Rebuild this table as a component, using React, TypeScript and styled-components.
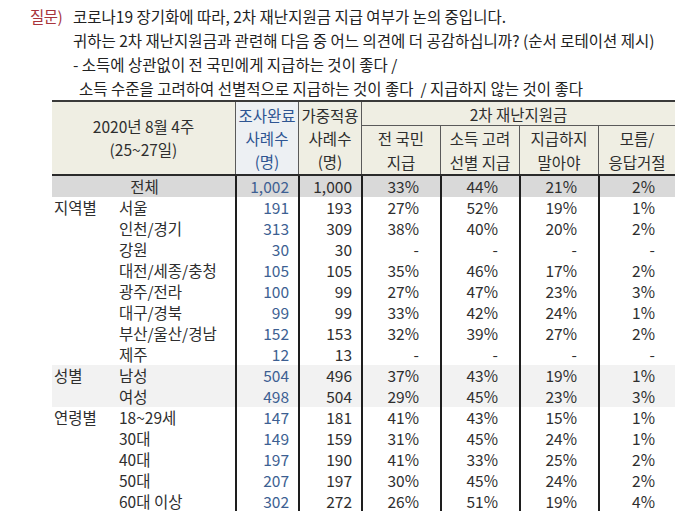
import styled, { createGlobalStyle } from "styled-components";

const GlobalStyle = createGlobalStyle`
  body {
    margin: 0;
    background: #ffffff;
    font-family: "Noto Sans CJK KR", "Noto Sans", sans-serif;
    color: #2e2e2e;
  }
`;

const COLS = "183px 63px 63px 79px 79px 79px 77px";

const Page = styled.div`
  width: 694px;
  height: 511px;
  overflow: hidden;
`;

const Question = styled.div`
  display: grid;
  grid-template-columns: 43px auto;
  padding: 4px 0 0 30px;
  font-size: 15.5px;
  line-height: 24px;
  color: #222;
`;

const QLabel = styled.span`
  color: #a8343c;
  letter-spacing: -0.5px;
`;

const QLines = styled.div`
  display: flex;
  flex-direction: column;
`;

const QLine = styled.div<{ $indent?: number }>`
  padding-left: ${(p) => p.$indent ?? 0}px;
  white-space: nowrap;
`;

const Table = styled.div`
  margin: 0 0 0 52px;
  width: 623px;
`;

const Header = styled.div`
  display: grid;
  grid-template-columns: ${COLS};
  grid-template-rows: 24px 48px;
  background: #efeee3;
  border-top: 2px solid #3a3a3a;
  border-bottom: 2px solid #2a2a2a;
`;

const HeadCell = styled.div<{ $rows?: number; $span?: number; $first?: boolean; $tint?: boolean; $under?: boolean }>`
  grid-row: span ${(p) => p.$rows ?? 1};
  grid-column: span ${(p) => p.$span ?? 1};
  display: flex;
  flex-direction: column;
  align-items: center;
  justify-content: center;
  font-size: 15.5px;
  line-height: ${(p) => (p.$rows === 2 ? "23px" : "24px")};
  text-align: center;
  white-space: nowrap;
  border-left: ${(p) => (p.$first ? "none" : "1px solid #5a5a5a")};
  border-bottom: ${(p) => (p.$under ? "1px solid #5a5a5a" : "none")};
  background: ${(p) => (p.$tint ? "#edf0f3" : "transparent")};
  color: ${(p) => (p.$tint ? "#2f5592" : "#2e2e2e")};
`;

const Row = styled.div<{ $bg?: string }>`
  display: grid;
  grid-template-columns: ${COLS};
  height: 21px;
  background: ${(p) => p.$bg ?? "transparent"};
  font-size: 15.5px;
  line-height: 21px;
`;

const LabelCell = styled.div<{ $center?: boolean }>`
  display: grid;
  grid-template-columns: ${(p) => (p.$center ? "1fr" : "65px 1fr")};
  padding-left: 2px;
  justify-items: ${(p) => (p.$center ? "center" : "start")};
  white-space: nowrap;
`;

const NumCell = styled.div<{ $blue?: boolean; $pad: number }>`
  border-left: 2px solid #1e1e1e;
  text-align: right;
  padding-right: ${(p) => p.$pad}px;
  color: ${(p) => (p.$blue ? "#3d5f92" : "#2e2e2e")};
  white-space: nowrap;
`;

type Line = { group?: string; name: string; n: string; w: string; p: string[]; bg?: string; center?: boolean };

const rows: Line[] = [
  { name: "전체", n: "1,002", w: "1,000", p: ["33%", "44%", "21%", "2%"], bg: "#d9d9d9", center: true },
  { group: "지역별", name: "서울", n: "191", w: "193", p: ["27%", "52%", "19%", "1%"] },
  { name: "인천/경기", n: "313", w: "309", p: ["38%", "40%", "20%", "2%"] },
  { name: "강원", n: "30", w: "30", p: ["-", "-", "-", "-"] },
  { name: "대전/세종/충청", n: "105", w: "105", p: ["35%", "46%", "17%", "2%"] },
  { name: "광주/전라", n: "100", w: "99", p: ["27%", "47%", "23%", "3%"] },
  { name: "대구/경북", n: "99", w: "99", p: ["33%", "42%", "24%", "1%"] },
  { name: "부산/울산/경남", n: "152", w: "153", p: ["32%", "39%", "27%", "2%"] },
  { name: "제주", n: "12", w: "13", p: ["-", "-", "-", "-"] },
  { group: "성별", name: "남성", n: "504", w: "496", p: ["37%", "43%", "19%", "1%"], bg: "#f2f2f2" },
  { name: "여성", n: "498", w: "504", p: ["29%", "45%", "23%", "3%"], bg: "#f2f2f2" },
  { group: "연령별", name: "18~29세", n: "147", w: "181", p: ["41%", "43%", "15%", "1%"] },
  { name: "30대", n: "149", w: "159", p: ["31%", "45%", "24%", "1%"] },
  { name: "40대", n: "197", w: "190", p: ["41%", "33%", "25%", "2%"] },
  { name: "50대", n: "207", w: "197", p: ["30%", "45%", "24%", "2%"] },
  { name: "60대 이상", n: "302", w: "272", p: ["26%", "51%", "19%", "4%"] },
];

const pctPad = [21, 21, 21, 20];

function App() {
  return (
    <Page>
      <GlobalStyle />
      <Question>
        <QLabel>질문)</QLabel>
        <QLines>
          <QLine>코로나19 장기화에 따라, 2차 재난지원금 지급 여부가 논의 중입니다.</QLine>
          <QLine>귀하는 2차 재난지원금과 관련해 다음 중 어느 의견에 더 공감하십니까? (순서 로테이션 제시)</QLine>
          <QLine>- 소득에 상관없이 전 국민에게 지급하는 것이 좋다 /</QLine>
          <QLine $indent={6}>소득 수준을 고려하여 선별적으로 지급하는 것이 좋다&nbsp;&nbsp;/ 지급하지 않는 것이 좋다</QLine>
        </QLines>
      </Question>
      <Table>
        <Header>
          <HeadCell $rows={2} $first>
            <span>2020년 8월 4주</span>
            <span>(25~27일)</span>
          </HeadCell>
          <HeadCell $rows={2} $tint>
            <span>조사완료</span>
            <span>사례수</span>
            <span>(명)</span>
          </HeadCell>
          <HeadCell $rows={2}>
            <span>가중적용</span>
            <span>사례수</span>
            <span>(명)</span>
          </HeadCell>
          <HeadCell $span={4} $under>2차 재난지원금</HeadCell>
          <HeadCell>
            <span>전 국민</span>
            <span>지급</span>
          </HeadCell>
          <HeadCell>
            <span>소득 고려</span>
            <span>선별 지급</span>
          </HeadCell>
          <HeadCell>
            <span>지급하지</span>
            <span>말아야</span>
          </HeadCell>
          <HeadCell>
            <span>모름/</span>
            <span>응답거절</span>
          </HeadCell>
        </Header>
        {rows.map((r, i) => (
          <Row key={i} $bg={r.bg}>
            <LabelCell $center={r.center}>
              {!r.center && <span>{r.group ?? ""}</span>}
              <span>{r.name}</span>
            </LabelCell>
            <NumCell $blue $pad={9}>{r.n}</NumCell>
            <NumCell $pad={9}>{r.w}</NumCell>
            {r.p.map((v, j) => (
              <NumCell key={j} $pad={pctPad[j]}>{v}</NumCell>
            ))}
          </Row>
        ))}
      </Table>
    </Page>
  );
}

export default App;
